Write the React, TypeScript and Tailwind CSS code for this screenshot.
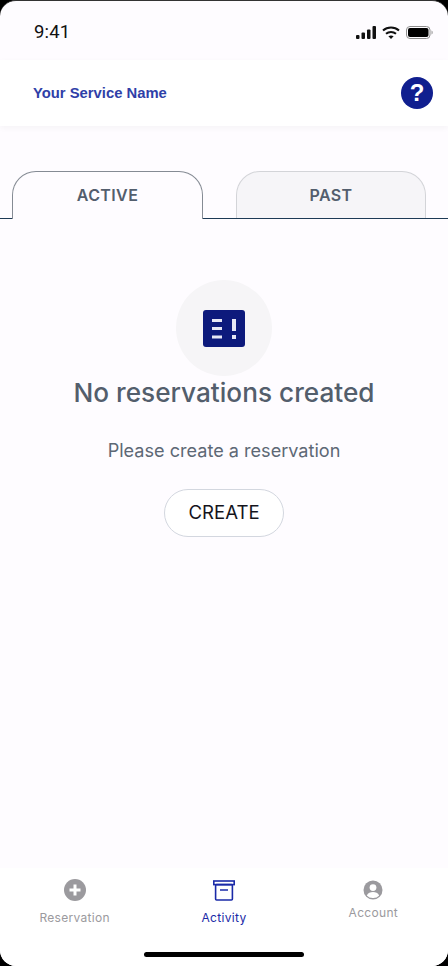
export default function App() {
  return (
    <div className="w-[448px] h-[966px] bg-black overflow-hidden" style={{ fontFamily: "Inter, 'Liberation Sans', sans-serif" }}>
      <div className="relative w-full h-full flex flex-col bg-[#fefcff] rounded-[16px] overflow-hidden border-t border-[#333]">
        <div className="h-[59px] shrink-0 flex items-center justify-between pl-[34px] pr-[15px] pt-[3px]">
          <span className="text-[18.5px] leading-[22px] font-normal text-[#111] tracking-[0.2px] [font-family:Roboto,sans-serif]">9:41</span>
          <div className="flex items-center gap-[5px]">
            <svg width="21" height="13" viewBox="0 0 21 13"><rect x="0" y="9" width="3.5" height="4" rx="1" fill="#111" /><rect x="5.500" y="6.500" width="3.500" height="6.500" rx="1" fill="#111" /><rect x="11" y="3.500" width="3.500" height="9.500" rx="1" fill="#111" /><rect x="16.500" y="0" width="3.500" height="13" rx="1" fill="#111" /></svg>
            <svg width="18" height="13" viewBox="0 0 18 13" fill="none" stroke="#111" strokeWidth="2"><path d="M1 4.600C5.500.6 12.500.6 17 4.600" /><path d="M4 7.700c2.800-2.400 7.200-2.400 10 0" /><path d="M9 13 6.400 10.300c1.400-1.200 3.800-1.200 5.200 0Z" fill="#111" stroke="none" /></svg>
            <svg width="27" height="13" viewBox="0 0 27 13" className="ml-[1px]"><rect x="0.500" y="0.500" width="23.500" height="12" rx="3.500" fill="none" stroke="#8d8d8d" /><rect x="2" y="2" width="20.500" height="9" rx="2" fill="#000" /><path d="M25.500 4.500c.8.3 1.200 1 1.200 2s-.4 1.700-1.200 2Z" fill="#999" /></svg>
          </div>
        </div>

        <header className="h-[66px] shrink-0 bg-white flex items-center justify-between pl-[33px] pr-[15px] shadow-[0_2px_6px_rgba(0,0,0,0.04)]">
          <span className="text-[14.8px] font-bold text-[#2f3fa8] [font-family:'Liberation_Sans',sans-serif]">Your Service Name</span>
          <span className="w-8 h-8 rounded-full bg-[#101f8f] flex items-center justify-center text-white text-[24px] leading-none font-bold [font-family:'Liberation_Sans',sans-serif]">?</span>
        </header>

        <div className="mt-[45px] h-[48px] shrink-0 flex items-end border-b border-[#1d3a55] pl-[12px]">
          <div className="w-[191px] h-[48px] -mb-px rounded-t-[24px] border border-b-0 border-[#858b94] bg-[#fefcff] flex items-center justify-center pb-[2px] text-[16px] font-semibold tracking-[0.4px] text-[#535e6d]">ACTIVE</div>
          <div className="ml-[33px] w-[190px] h-[47px] rounded-t-[24px] border border-b-0 border-[#d3d4d8] bg-[#f6f5f8] flex items-center justify-center pb-[1px] text-[16px] font-semibold tracking-[0.4px] text-[#535e6d]">PAST</div>
        </div>

        <main className="flex flex-col items-center pt-[61px]">
          <div className="w-24 h-24 rounded-full bg-[#f6f5f7] flex items-center justify-center">
            <svg width="42" height="37" viewBox="0 0 42 37">
              <rect x="0" y="0" width="42" height="37" rx="3" fill="#0d1a7c" />
              <rect x="9" y="9" width="10" height="3" fill="#e6e7f5" />
              <rect x="9" y="17" width="10" height="3" fill="#e6e7f5" />
              <rect x="9" y="25.500" width="10" height="3" fill="#e6e7f5" />
              <rect x="29" y="9" width="4" height="12" fill="#e6e7f5" />
              <rect x="29" y="25" width="4" height="4" fill="#e6e7f5" />
            </svg>
          </div>
          <h1 className="mt-[-1px] text-[26.2px] leading-[36px] font-medium text-[#535e6c]">No reservations created</h1>
          <p className="mt-[25px] text-[18.1px] leading-[28px] text-[#5d6875]">Please create a reservation</p>
          <button className="mt-[25px] w-[120px] h-[48px] rounded-full border border-[#d3d7df] bg-white text-[18.6px] text-[#14141c]">CREATE</button>
        </main>

        <nav className="absolute bottom-0 left-0 right-0 h-[98px] bg-white">
          <div className="grid grid-cols-3 h-full">
            <div className="flex flex-col items-center pt-[11px]">
              <svg width="22" height="22" viewBox="0 0 22 22"><circle cx="11" cy="11" r="11" fill="#9b9a9e" /><path d="M11 5.500v11M5.500 11h11" stroke="#fff" strokeWidth="3" /></svg>
              <span className="mt-[9px] text-[12px] leading-[16px] tracking-[0.3px] text-[#9b9a9e]">Reservation</span>
            </div>
            <div className="flex flex-col items-center pt-[12px]">
              <svg width="22" height="21" viewBox="0 0 22 21" fill="none" stroke="#1a2aa8" strokeWidth="1.600"><rect x="0.800" y="1" width="20.400" height="3.600" /><rect x="2.600" y="4.600" width="16.800" height="15.400" rx="1" /><path d="M7 10h8" /></svg>
              <span className="mt-[9px] text-[12px] leading-[16px] tracking-[0.3px] text-[#1a2aa8]">Activity</span>
            </div>
            <div className="flex flex-col items-center pt-[12px]">
              <svg width="20" height="20" viewBox="0 0 20 20"><circle cx="10" cy="10" r="9.500" fill="#9b9a9e" /><circle cx="10" cy="7.600" r="3.400" fill="#fff" /><path d="M3.800 15.400C5 12.800 7.400 12 10 12s5 .8 6.200 3.400A8 8 0 0 1 10 18a8 8 0 0 1-6.200-2.600Z" fill="#fff" /></svg>
              <span className="mt-[5px] text-[12px] leading-[16px] tracking-[0.3px] text-[#9b9a9e]">Account</span>
            </div>
          </div>
          <div className="absolute left-[144px] bottom-[9px] w-[160px] h-[5px] rounded-full bg-black" />
        </nav>
      </div>
    </div>
  );
}
